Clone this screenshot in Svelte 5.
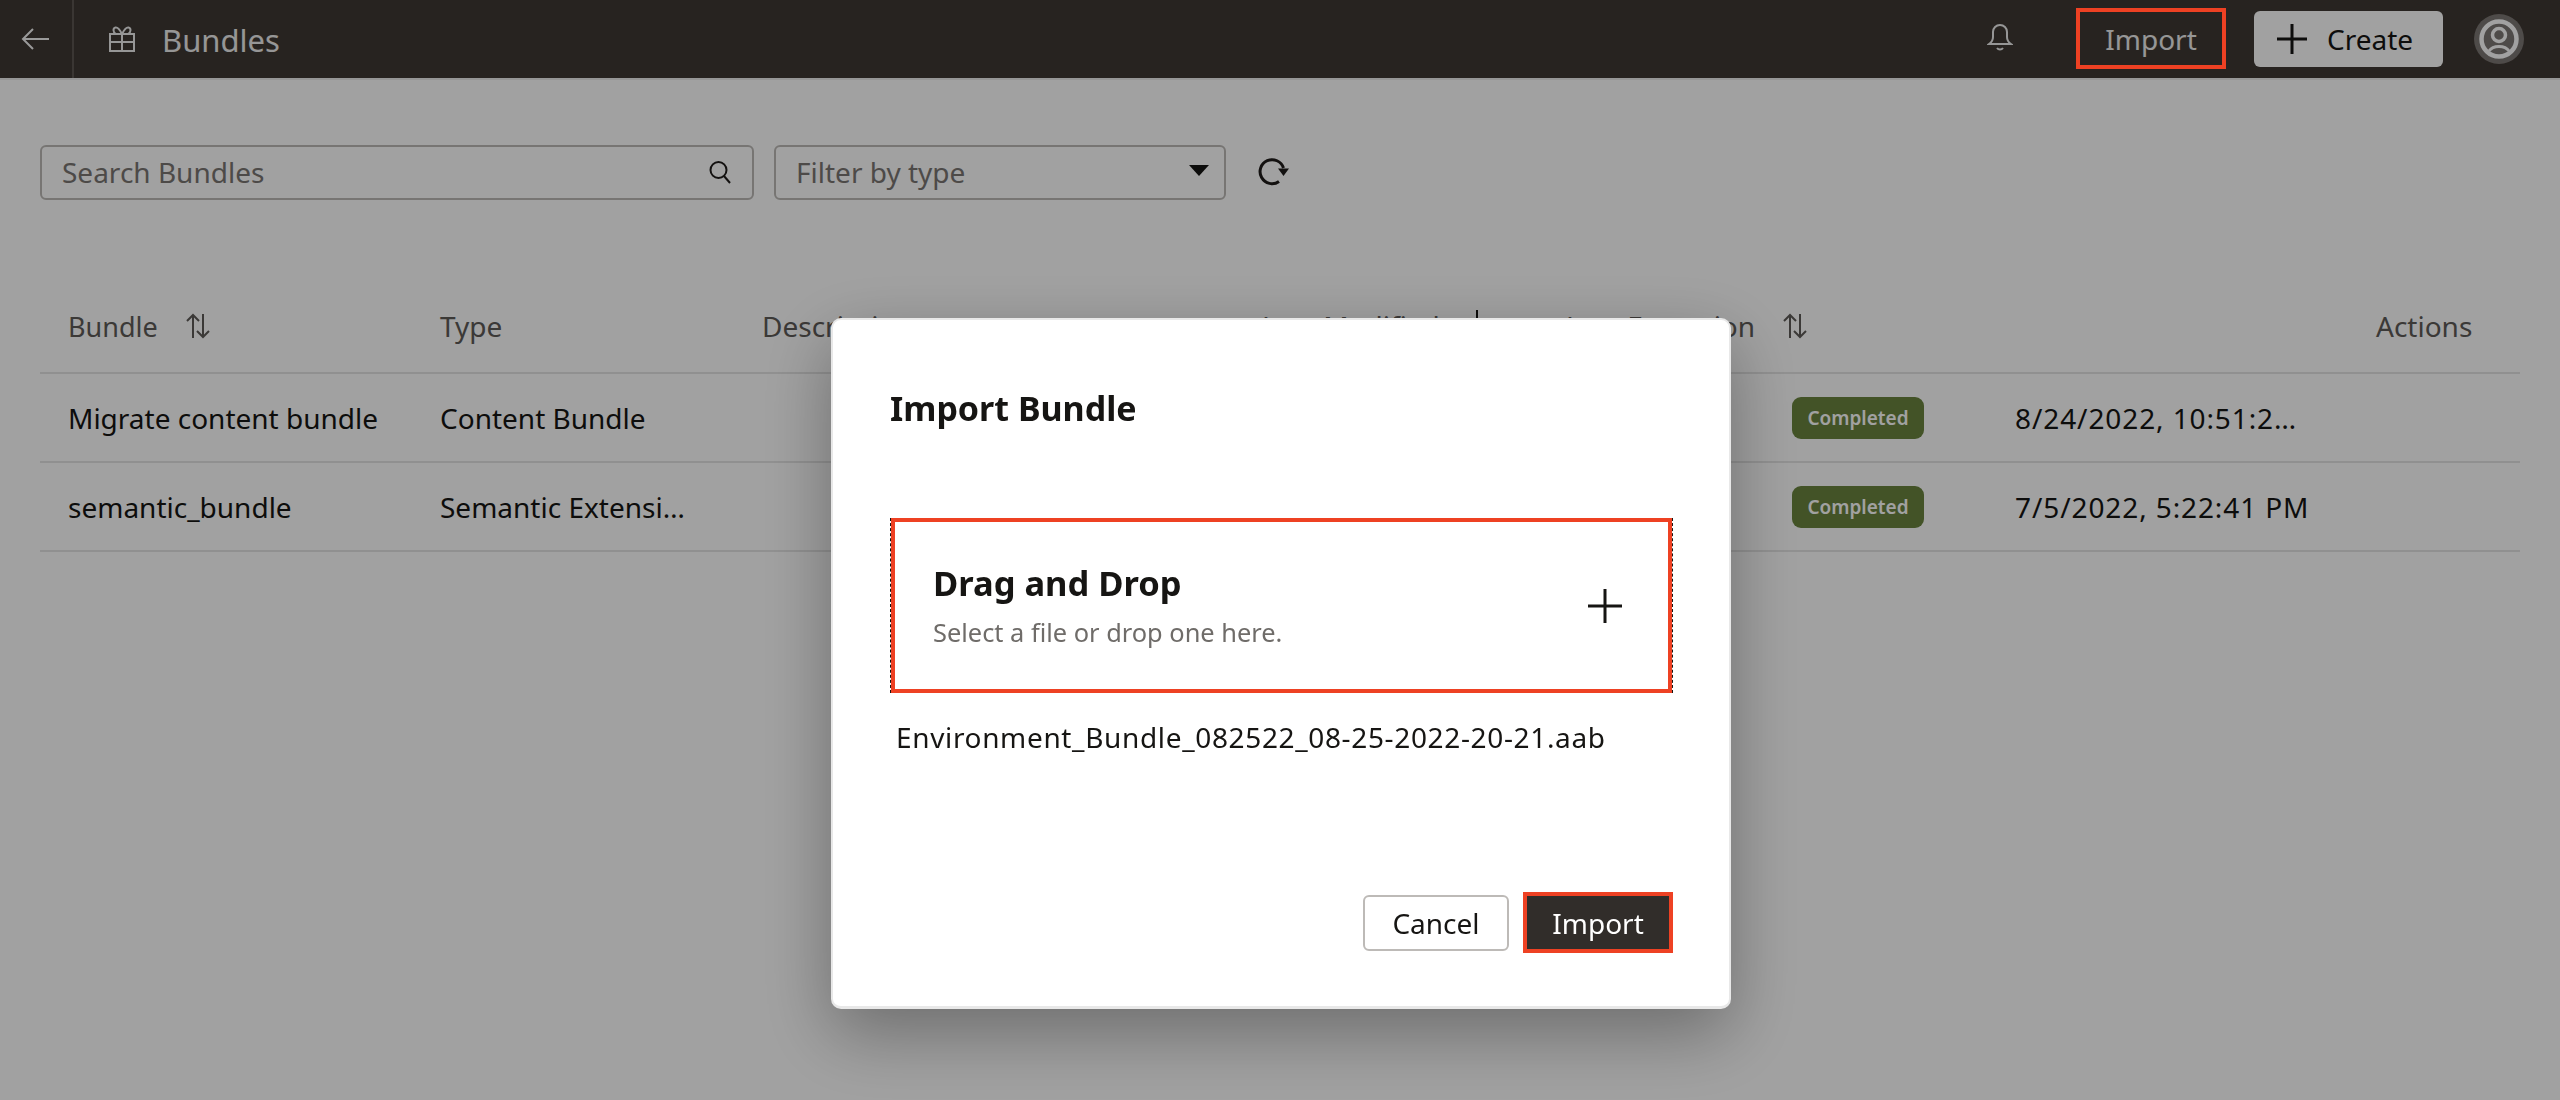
<script>
  const rows = [
    { name: 'Migrate content bundle', type: 'Content Bundle', date: '8/24/2022, 10:51:2…' },
    { name: 'semantic_bundle', type: 'Semantic Extensi…', date: '7/5/2022, 5:22:41 PM' }
  ];
</script>

<div class="page">
  <header class="bar">
    <button class="back" aria-label="Back">
      <svg width="30" height="30" viewBox="0 0 30 30" fill="none" stroke="currentColor" stroke-width="2"><path d="M28 15H2M12 5 2 15l10 10"/></svg>
    </button>
    <svg class="gift" width="28" height="28" viewBox="0 0 28 28" fill="none" stroke="currentColor" stroke-width="2"><path d="M2 9h24v17H2zM2 17h24M14 9v17M14 9c-2-4-4-7-6.500-6.500S4.500 7 8 9M14 9c2-4 4-7 6.500-6.500S23.500 7 20 9"/></svg>
    <h1>Bundles</h1>
    <div class="bar-right">
      <svg class="bell" width="26" height="28" viewBox="0 0 26 28" fill="none" stroke="currentColor" stroke-width="2"><path d="M2 21c3-2 4-4 4-7V9a7 7 0 0 1 14 0v5c0 3 1 5 4 7zM10 25c1.500 2 4.500 2 6 0"/></svg>
      <span class="bar-import">Import</span>
      <button class="create">
        <svg width="32" height="32" viewBox="0 0 32 32" stroke="currentColor" stroke-width="3"><path d="M16 1v30M1 16h30"/></svg>
        <span>Create</span>
      </button>
      <div class="avatar">
        <svg width="50" height="50" viewBox="0 0 50 50" fill="none" stroke="#fff" stroke-width="4.500"><circle cx="25" cy="25" r="17.500"/><circle cx="25" cy="21" r="6.500" stroke-width="3.500"/><path d="M15 37c2-3 6-4.500 10-4.500s8 1.500 10 4.500" stroke-width="3"/></svg>
      </div>
    </div>
  </header>

  <div class="filters">
    <div class="field search">
      <span>Search Bundles</span>
      <svg width="24" height="24" viewBox="0 0 24 24" fill="none" stroke="#1f1c1a" stroke-width="2"><circle cx="10.500" cy="10" r="8"/><path d="m16 16 6 7"/></svg>
    </div>
    <div class="field filter">
      <span>Filter by type</span>
      <i class="caret"></i>
    </div>
    <svg class="refresh" width="34" height="30" viewBox="0 0 34 30" fill="none" stroke="#1f1c1a" stroke-width="3"><path d="M22 25.500A12 12 0 1 1 26.500 12"/><path d="M21 12.500h11l-5.500 7.500z" fill="#1f1c1a" stroke="none"/></svg>
  </div>

  <div class="table">
    <div class="row head">
      <div class="c1">Bundle <svg class="sort" width="26" height="26" viewBox="0 0 26 26" fill="none" stroke="currentColor" stroke-width="2"><path d="M8 25V2M2 8l6-6 6 6M18 1v23M12 18l6 6 6-6"/></svg></div>
      <div class="c2">Type</div>
      <div class="c3">Description</div>
      <div class="h4">Last Modified<i class="divider"></i></div>
      <div class="h5">Last Execution <svg class="sort" width="26" height="26" viewBox="0 0 26 26" fill="none" stroke="currentColor" stroke-width="2"><path d="M8 25V2M2 8l6-6 6 6M18 1v23M12 18l6 6 6-6"/></svg></div>
      <div class="c6">Actions</div>
    </div>
    {#each rows as r}
      <div class="row">
        <div class="c1">{r.name}</div>
        <div class="c2">{r.type}</div>
        <div class="c3"></div>
        <div class="c4"></div>
        <div class="c5 status"><span class="badge">Completed</span><span class="date">{r.date}</span></div>
        <div class="c6"></div>
      </div>
    {/each}
  </div>
</div>

<div class="scrim">
  <div class="modal">
    <h2>Import Bundle</h2>
    <div class="drop">
      <div class="drop-text">
        <strong>Drag and Drop</strong>
        <span>Select a file or drop one here.</span>
      </div>
      <svg width="34" height="34" viewBox="0 0 34 34" stroke="#161513" stroke-width="3"><path d="M17 0v34M0 17h34"/></svg>
    </div>
    <p class="file">Environment_Bundle_082522_08-25-2022-20-21.aab</p>
    <div class="actions">
      <button class="cancel">Cancel</button>
      <button class="primary">Import</button>
    </div>
  </div>
</div>

<div class="callout"></div>

<style>
  :global(body) { margin: 0; background: #fff; }
  .page, .scrim { font-family: "Noto Sans", "Open Sans", sans-serif; }
  .page { width: 2560px; height: 1100px; overflow: hidden; color: #161513; background: #fff; }
  button { font-family: inherit; }
  .bar { height: 78px; background: #3e3833; border-bottom: 2px solid #eee; display: flex; align-items: center; color: #fff; }
  .back { width: 74px; height: 78px; background: none; border: 0; border-right: 2px solid #5c5652; color: #f4f4f4; padding: 0; display: flex; align-items: center; justify-content: center; }
  .gift { margin-left: 34px; color: #eee; }
  h1 { font-size: 31px; font-weight: 400; margin: 2px 0 0 26px; color: #eee; }
  .bar-right { margin-left: auto; display: flex; align-items: center; }
  .bell { color: #eee; margin-bottom: 4px; }
  .bar-import { font-size: 28px; color: #eee; margin-left: 81px; width: 114px; text-align: center; }
  .create { margin-left: 46px; width: 189px; height: 56px; border: 0; border-radius: 6px; background: #fff; color: #161513; font-size: 28px; display: flex; align-items: center; padding: 0 0 0 22px; gap: 19px; }
  .avatar { width: 50px; height: 50px; border-radius: 50%; background: #7c7774; margin: 0 36px 0 31px; }
  .filters { display: flex; align-items: center; padding: 64px 0 0 40px; height: 57px; }
  .field { box-sizing: border-box; height: 55px; border: 2px solid #bdbab7; border-radius: 6px; display: flex; align-items: center; justify-content: space-between; font-size: 28px; color: #7a7673; padding: 0 20px 2px; }
  .search { width: 714px; }
  .filter { width: 452px; margin-left: 20px; padding-right: 15px; }
  .caret { border: 10px solid transparent; border-top: 11px solid #161513; border-bottom: 0; margin-bottom: 2px; }
  .refresh { margin-left: 31px; margin-top: -3px; }
  .table { margin: 79px 0 0 40px; width: 2480px; font-size: 28px; }
  .row { display: flex; height: 87px; border-bottom: 2px solid #e5e5e5; align-items: center; box-sizing: content-box; }
  .row.head { height: 92px; color: #5e5b58; }
  .row > div { box-sizing: border-box; padding-left: 28px; white-space: nowrap; display: flex; align-items: center; }
  .c1 { width: 372px; }
  .c2 { width: 322px; }
  .c3 { width: 500px; }
  .c4 { width: 530px; }
  .c5 { width: 600px; }
  .c6 { flex: 1; }
  .head .c1 { font-size: 27px; }
  .row > .h4 { width: 244px; justify-content: space-between; }
  .row > .h5 { width: 870px; padding-left: 88px; }
  .divider { width: 2px; height: 30px; background: #161513; margin-top: -2px; }
  .sort { margin-left: 27px; }
  .badge { width: 132px; height: 42px; background: #6a843e; color: #fff; border-radius: 9px; font-size: 19px; font-weight: 600; display: flex; align-items: center; justify-content: center; }
  .status { gap: 91px; }
  .date { width: 320px; letter-spacing: .9px; }
  .scrim { position: fixed; inset: 0; background: rgba(0,0,0,.37); display: flex; justify-content: center; align-items: flex-start; padding: 318px 0 0 2px; box-sizing: border-box; }
  .modal { width: 900px; height: 691px; box-sizing: border-box; background: #fff; border-radius: 10px; border: 2px solid #e8e8e8; border-width: 2px 2px 3px 2px; box-shadow: 0 24px 70px rgba(0,0,0,.33); padding: 61px 56px 0 57px; color: #161513; display: flex; flex-direction: column; }
  h2 { margin: 0; font-size: 34px; font-weight: 700; line-height: 54px; }
  .drop { box-sizing: border-box; height: 175px; margin-top: 83px; border: 0; border-inline: 1px dashed #161513; box-shadow: inset 0 0 0 4px #ee4123; display: flex; align-items: center; justify-content: space-between; padding: 0 50px 0 42px; }
  .drop-text { display: flex; flex-direction: column; gap: 6px; margin-top: -2px; }
  .drop-text strong { font-size: 34.500px; line-height: 48px; }
  .drop-text span { font-size: 25.400px; color: #6f6c69; line-height: 36px; margin-top: 1px; }
  .file { margin: 20px 0 0 6px; font-size: 28px; letter-spacing: .65px; line-height: 48px; white-space: nowrap; }
  .actions { display: flex; justify-content: flex-end; align-items: center; gap: 14px; margin-top: auto; margin-bottom: 53px; }
  .cancel { width: 146px; height: 56px; background: #fff; border: 2px solid #bdbab7; border-radius: 6px; font-size: 28px; color: #161513; }
  .primary { width: 150px; height: 61px; background: #312d2a; border: 4px solid #ee4123; font-size: 28px; color: #fff; }
  .callout { position: fixed; left: 2076px; top: 8px; width: 150px; height: 61px; box-sizing: border-box; border: 4px solid #ee4123; }
</style>
